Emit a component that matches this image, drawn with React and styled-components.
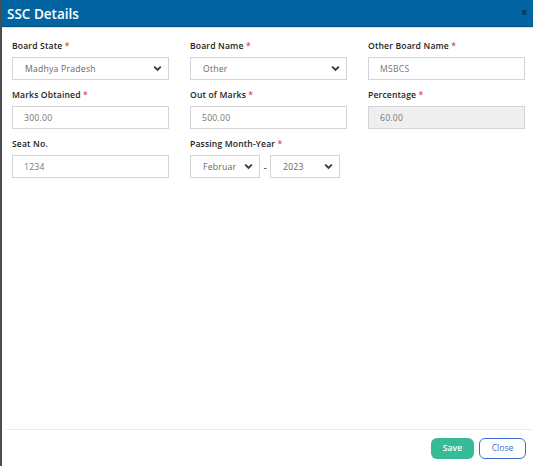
import React from 'react';
import styled, { createGlobalStyle } from 'styled-components';

const GlobalStyle = createGlobalStyle`
  html, body {
    margin: 0;
    padding: 0;
    background: #4d4d4d;
    font-family: "Open Sans", "Liberation Sans", sans-serif;
  }
`;

const Chevron = () => (
  <svg width="9" height="7" viewBox="0 0 9 7">
    <path d="M1.2 1.6 L4.5 4.9 L7.8 1.6" fill="none" stroke="#3a3a3a" strokeWidth="1.9" />
  </svg>
);

const Field = ({ label, required, children }) => (
  <FieldBox>
    <Label>
      {label}
      {required && <Star> *</Star>}
    </Label>
    {children}
  </FieldBox>
);

const SelectBox = ({ value, width }) => (
  <Select $width={width}>
    <span>{value}</span>
    <Chevron />
  </Select>
);

export default function App() {
  return (
    <>
      <GlobalStyle />
      <Modal>
        <Header>
          <Title>SSC Details</Title>
          <CloseX>x</CloseX>
        </Header>
        <Body>
          <Grid>
            <Field label="Board State" required>
              <SelectBox value="Madhya Pradesh" />
            </Field>
            <Field label="Board Name" required>
              <SelectBox value="Other" />
            </Field>
            <Field label="Other Board Name" required>
              <Input>MSBCS</Input>
            </Field>
            <Field label="Marks Obtained" required>
              <Input>300.00</Input>
            </Field>
            <Field label="Out of Marks" required>
              <Input>500.00</Input>
            </Field>
            <Field label="Percentage" required>
              <Input $disabled>60.00</Input>
            </Field>
            <Field label="Seat No.">
              <Input>1234</Input>
            </Field>
            <Field label="Passing Month-Year" required>
              <DateRow>
                <SelectBox value="Februar" width="70px" />
                <Dash>-</Dash>
                <SelectBox value="2023" width="70px" />
              </DateRow>
            </Field>
          </Grid>
        </Body>
        <Footer>
          <SaveButton type="button">Save</SaveButton>
          <CloseButton type="button">Close</CloseButton>
        </Footer>
      </Modal>
    </>
  );
}

const Modal = styled.div`
  margin-left: 2px;
  height: 466px;
  background: #ffffff;
  display: flex;
  flex-direction: column;
`;

const Header = styled.div`
  height: 26px;
  background: #0264a0;
  border-bottom: 1px solid #034e7e;
  box-shadow: 0 1px 0 #cfe6f5;
  display: flex;
  align-items: center;
  justify-content: space-between;
  padding: 0 6px 0 5px;
`;

const Title = styled.div`
  color: #ffffff;
  font-size: 13.5px;
  font-weight: 600;
  margin-top: 1px;
`;

const CloseX = styled.div`
  color: #0c2a45;
  font-size: 9px;
  font-weight: 700;
  align-self: flex-start;
  margin-top: 5px;
`;

const Body = styled.div`
  flex: 1;
  padding: 13px 8px 0 10px;
`;

const Grid = styled.div`
  display: grid;
  grid-template-columns: repeat(3, 157px);
  column-gap: 21px;
  row-gap: 9px;
`;

const FieldBox = styled.div`
  display: flex;
  flex-direction: column;
`;

const Label = styled.div`
  font-size: 8.6px;
  font-weight: 600;
  letter-spacing: 0.15px;
  color: #222;
  height: 17px;
  line-height: 12px;
`;

const Star = styled.span`
  color: #e24a4a;
`;

const Input = styled.div`
  box-sizing: border-box;
  height: 23px;
  border: 1px solid #d4d4d4;
  background: ${(p) => (p.$disabled ? '#efefef' : '#ffffff')};
  color: #777;
  font-size: 8.6px;
  letter-spacing: 0.25px;
  display: flex;
  align-items: center;
  padding-left: 11px;
`;

const Select = styled.div`
  box-sizing: border-box;
  height: 23px;
  width: ${(p) => p.$width || 'auto'};
  border: 1px solid #d4d4d4;
  background: #ffffff;
  color: #666;
  font-size: 8.6px;
  letter-spacing: 0.25px;
  display: flex;
  align-items: center;
  justify-content: space-between;
  padding: 0 6px 0 12px;
  overflow: hidden;
  white-space: nowrap;

  span {
    overflow: hidden;
  }
`;

const DateRow = styled.div`
  display: flex;
  align-items: center;
  gap: 2px;
`;

const Dash = styled.span`
  color: #333;
  font-size: 10px;
  width: 6px;
  text-align: center;
`;

const Footer = styled.div`
  border-top: 1px solid #ececec;
  margin-left: 4px;
  height: 36px;
  display: flex;
  align-items: center;
  justify-content: flex-end;
  gap: 5px;
  padding-right: 7px;
`;

const SaveButton = styled.button`
  height: 21px;
  width: 43px;
  border: none;
  border-radius: 6px;
  background: #36bb96;
  color: #ffffff;
  font-family: inherit;
  font-size: 8.6px;
  font-weight: 600;
  padding: 0;
`;

const CloseButton = styled.button`
  height: 21px;
  width: 47px;
  border: 1px solid #3a6fd0;
  border-radius: 6px;
  background: #ffffff;
  color: #3a6fd0;
  font-family: inherit;
  font-size: 8.6px;
  padding: 0;
`;
